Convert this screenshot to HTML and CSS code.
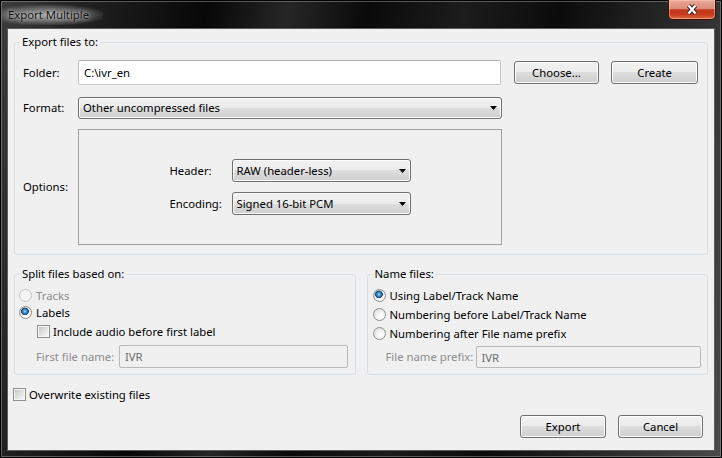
FILE: index.html
```html
<!DOCTYPE html>
<html lang="en">
<head>
  <meta charset="UTF-8">
  <meta name="viewport" content="width=device-width, initial-scale=1.0">
  <title>Export Multiple</title>
  <link rel="stylesheet" href="styles.css">
</head>
<body>
  <div class="window">
    <div class="titlebar">
      <span class="title">Export Multiple</span>
      <button class="close-btn" title="Close">
        <svg width="12" height="11" viewBox="0 0 12 11">
          <path d="M2.5 1.5 L9.5 9.5 M9.5 1.5 L2.5 9.5" stroke="#3a2a28" stroke-width="4.2" fill="none"/>
          <path d="M2.5 1.5 L9.5 9.5 M9.5 1.5 L2.5 9.5" stroke="#ffffff" stroke-width="2.2" fill="none"/>
        </svg>
      </button>
    </div>

    <div class="client">
      <fieldset class="group export-group">
        <legend>Export files to:</legend>
        <div class="group-body export-body">
          <div class="row">
            <span class="field-label">Folder:</span>
            <input class="text-input folder-input" type="text" value="C:\ivr_en">
            <button class="btn choose-btn">Choose...</button>
            <button class="btn create-btn">Create</button>
          </div>

          <div class="row format-row">
            <span class="field-label">Format:</span>
            <div class="combo format-combo">
              <span>Other uncompressed files</span>
              <svg class="arrow" width="7" height="4" viewBox="0 0 7 4"><polygon points="0,0 7,0 3.5,4" fill="#000"/></svg>
            </div>
          </div>

          <div class="row options-row">
            <span class="field-label">Options:</span>
            <div class="options-box">
              <div class="option-line">
                <span class="option-label">Header:</span>
                <div class="combo option-combo">
                  <span>RAW (header-less)</span>
                  <svg class="arrow" width="7" height="4" viewBox="0 0 7 4"><polygon points="0,0 7,0 3.5,4" fill="#000"/></svg>
                </div>
              </div>
              <div class="option-line">
                <span class="option-label">Encoding:</span>
                <div class="combo option-combo">
                  <span>Signed 16-bit PCM</span>
                  <svg class="arrow" width="7" height="4" viewBox="0 0 7 4"><polygon points="0,0 7,0 3.5,4" fill="#000"/></svg>
                </div>
              </div>
            </div>
          </div>
        </div>
      </fieldset>

      <div class="split-row">
        <fieldset class="group split-group">
          <legend>Split files based on:</legend>
          <div class="group-body split-body">
            <label class="radio disabled"><span class="radio-mark"></span>Tracks</label>
            <label class="radio"><span class="radio-mark checked"></span>Labels</label>
            <label class="check indent"><span class="check-mark"></span>Include audio before first label</label>
            <div class="row sub-field">
              <span class="sub-label first-label">First file name:</span>
              <input class="text-input first-input" type="text" value="IVR" disabled>
            </div>
          </div>
        </fieldset>

        <fieldset class="group name-group">
          <legend>Name files:</legend>
          <div class="group-body name-body">
            <label class="radio tall"><span class="radio-mark checked"></span>Using Label/Track Name</label>
            <label class="radio tall"><span class="radio-mark"></span>Numbering before Label/Track Name</label>
            <label class="radio tall"><span class="radio-mark"></span>Numbering after File name prefix</label>
            <div class="row sub-field prefix-field">
              <span class="sub-label prefix-label">File name prefix:</span>
              <input class="text-input prefix-input" type="text" value="IVR" disabled>
            </div>
          </div>
        </fieldset>
      </div>

      <label class="check overwrite"><span class="check-mark"></span>Overwrite existing files</label>

      <div class="dialog-buttons">
        <button class="btn export-btn">Export</button>
        <button class="btn cancel-btn">Cancel</button>
      </div>
    </div>
  </div>
</body>
</html>
```

FILE: styles.css
```css
:root {
  --client-bg: #f0f0f0;
  --text-color: #000000;
  --disabled-text: #8d8d8d;
  --group-border: #d5dfe5;
  --btn-border: #707070;
  --field-border: #c3c6cb;
  --font: 'Noto Sans', 'Segoe UI', sans-serif;
}

* {
  margin: 0;
  padding: 0;
  box-sizing: border-box;
}

html, body {
  width: 722px;
  height: 458px;
  overflow: hidden;
  background: #000;
}

body {
  font-family: var(--font);
  font-size: 11.3px;
  line-height: 16px;
  color: var(--text-color);
}

button, input {
  font: inherit;
  color: inherit;
}

/* window frame */
.window {
  width: 722px;
  height: 458px;
  display: flex;
  flex-direction: column;
  background: linear-gradient(100deg, #3d3d3d 0%, #222 10%, #070707 26%, #262626 36%, #0a0a0a 46%, #1c1c1c 58%, #0b0b0b 70%, #2c2c2c 86%, #4a4a4a 100%);
  box-shadow: inset 0 0 0 1px #000, inset 0 0 0 2px rgba(170, 170, 170, 0.45);
}

.titlebar {
  height: 29px;
  flex: none;
  display: flex;
  justify-content: space-between;
  align-items: flex-start;
  padding-left: 2px;
  padding-right: 6px;
}

.title {
  margin-top: 5px;
  padding: 2px 14px 2px 6px;
  color: #111;
  background: radial-gradient(ellipse at 45% 50%, rgba(200, 200, 200, 0.75) 0%, rgba(160, 160, 160, 0.45) 50%, rgba(120, 120, 120, 0) 78%);
  text-shadow: 0 0 3px rgba(255, 255, 255, 0.6), 0 0 7px rgba(255, 255, 255, 0.4);
}

.close-btn {
  width: 48px;
  height: 20px;
  display: flex;
  align-items: center;
  justify-content: center;
  border: 1px solid #3b1209;
  border-top: none;
  border-radius: 0 0 5px 5px;
  background: linear-gradient(#e9a999 0%, #dc8b77 45%, #c2391c 52%, #c53a1c 75%, #e06a45 100%);
  box-shadow: inset 0 0 0 1px rgba(255, 210, 190, 0.45);
}

/* client area */
.client {
  flex: none;
  height: 421px;
  margin: 0 8px;
  padding: 0 6px;
  background: var(--client-bg);
  box-shadow: 0 0 0 1px #5c5c5c;
  display: flex;
  flex-direction: column;
}

.group {
  border: 1px solid var(--group-border);
  border-radius: 3px;
  min-width: 0;
}

.group legend {
  margin-left: 5px;
  padding: 0 2px;
  line-height: 16px;
}

.export-group {
  margin-top: 5px;
}

.export-body {
  padding: 10px 9px 9px 8px;
}

.row {
  display: flex;
  align-items: center;
}

.field-label {
  width: 55px;
  flex: none;
}

.text-input {
  height: 25px;
  padding: 0 5px;
  background: #fff;
  border: 1px solid var(--field-border);
  border-top-color: #abadb3;
  border-radius: 2px;
  outline: none;
}

.folder-input {
  width: 424px;
}

.text-input:disabled {
  background: var(--client-bg);
  border-color: #b8b8b8;
  color: #6d6d6d;
}

.btn {
  height: 23px;
  width: 86px;
  border: 1px solid var(--btn-border);
  border-radius: 3px;
  background: linear-gradient(#f2f2f2 0%, #ebebeb 50%, #dddddd 50%, #cfcfcf 100%);
  box-shadow: inset 0 0 0 1px #fcfcfc;
  text-align: center;
}

.choose-btn {
  margin-left: 13px;
}

.create-btn {
  margin-left: 12px;
  width: 87px;
}

.combo {
  display: flex;
  align-items: center;
  justify-content: space-between;
  padding: 0 4px 0 4px;
  border: 1px solid var(--btn-border);
  border-radius: 3px;
  background: linear-gradient(#f2f2f2 0%, #ebebeb 50%, #dddddd 50%, #cfcfcf 100%);
  box-shadow: inset 0 0 0 1px #fcfcfc;
}

.arrow {
  flex: none;
}

.format-row {
  margin-top: 12px;
}

.format-combo {
  width: 424px;
  height: 22px;
}

.options-row {
  margin-top: 10px;
}

.options-box {
  width: 424px;
  height: 116px;
  border: 1px solid #a0a0a0;
  display: flex;
  flex-direction: column;
  align-items: center;
  justify-content: center;
  gap: 10px;
}

.option-line {
  display: flex;
  align-items: center;
}

.option-label {
  width: 62px;
}

.option-combo {
  width: 179px;
  height: 23px;
}

/* lower groups */
.split-row {
  display: flex;
  gap: 11px;
  margin-top: 11px;
}

.split-row .group {
  flex: 1;
}

.split-body {
  padding: 5px 6px 6px 4px;
  display: flex;
  flex-direction: column;
}

.name-body {
  padding: 4px 6px 5px 5px;
  display: flex;
  flex-direction: column;
}

.radio {
  display: flex;
  align-items: center;
  gap: 4px;
  height: 17px;
}

.radio.tall {
  height: 19px;
}

.radio.disabled {
  color: var(--disabled-text);
}

.radio-mark {
  width: 13px;
  height: 13px;
  flex: none;
  border-radius: 50%;
  border: 1px solid #8e8f8f;
  background: radial-gradient(circle at 65% 70%, #ffffff 0%, #f1f1f1 45%, #d4d4d4 100%);
}

.radio.disabled .radio-mark {
  border-color: #c2c2c2;
  background: #f4f4f4;
}

.radio-mark.checked {
  background: radial-gradient(circle at 45% 40%, #b4e6fb 0px, #3d95d8 1.6px, #1d5e98 3px, #163f68 3.6px, transparent 4.1px),
    radial-gradient(circle at 65% 70%, #ffffff 0%, #f1f1f1 45%, #d4d4d4 100%);
}

.check {
  display: flex;
  align-items: center;
  gap: 3px;
}

.check-mark {
  width: 13px;
  height: 13px;
  flex: none;
  border: 1px solid #8e8f8f;
  padding: 1px;
  background: linear-gradient(135deg, #c8c8c8, #f8f8f8) content-box, #f6f6f6;
}

.check.indent {
  margin-top: 2px;
  margin-left: 18px;
  height: 17px;
}

.sub-field {
  margin-top: 5px;
}

.sub-label {
  color: var(--disabled-text);
  flex: none;
}

.first-label {
  margin-left: 17px;
  width: 83px;
}

.first-input {
  width: 229px;
  height: 23px;
}

.prefix-field {
  margin-top: 3px;
}

.prefix-label {
  margin-left: 13px;
  width: 90px;
}

.prefix-input {
  width: 226px;
  height: 22px;
}

.overwrite {
  margin-top: 13px;
  margin-left: -1px;
  height: 13px;
}

.dialog-buttons {
  display: flex;
  justify-content: flex-end;
  gap: 12px;
  margin-top: 14px;
  padding-right: 5px;
}

.cancel-btn {
  width: 85px;
}
```
